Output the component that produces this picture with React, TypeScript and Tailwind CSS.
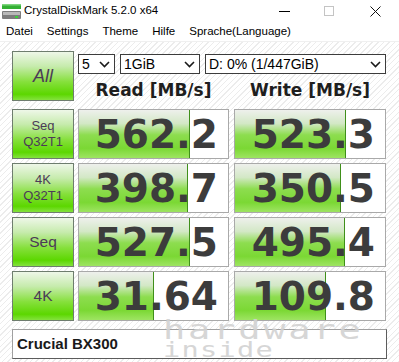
import React from 'react';

type Row = {
  label: string[];
  read: string;
  write: string;
  readFill: number;
  writeFill: number;
};

const rows: Row[] = [
  { label: ['Seq', 'Q32T1'], read: '562.2', write: '523.3', readFill: 111, writeFill: 111 },
  { label: ['4K', 'Q32T1'], read: '398.7', write: '350.5', readFill: 109, writeFill: 106 },
  { label: ['Seq'], read: '527.5', write: '495.4', readFill: 111, writeFill: 110 },
  { label: ['4K'], read: '31.64', write: '109.8', readFill: 75, writeFill: 91 },
];

const Chevron = () => (
  <svg width="11" height="7" viewBox="0 0 11 7" className="shrink-0">
    <path d="M1 1 L5.5 5.5 L10 1" fill="none" stroke="#1a1a1a" strokeWidth="1.6" />
  </svg>
);

const Select = ({ value, width }: { value: string; width: string }) => (
  <div className={`${width} h-[20px] bg-white border border-[#3c3c3c] flex items-center justify-between pl-[3px] pr-[4px] text-[14px] text-black leading-none`}>
    <span>{value}</span>
    <Chevron />
  </div>
);

const LabelButton = ({ children, h }: { children: React.ReactNode; h: string }) => (
  <div className={`w-[62px] ${h} shrink-0 border border-[#6e7d6e] bg-[linear-gradient(to_bottom,#eef7e8_0%,#c6ebac_30%,#86e03c_62%,#5cd700_88%,#84e23e_100%)] flex flex-col items-center justify-center text-[#4b3b57]`}>
    {children}
  </div>
);

const ValueBox = ({ value, fill, width }: { value: string; fill: number; width: string }) => (
  <div className={`${width} h-full relative border border-[#a9a9a9] bg-white`}>
    <div
      className="h-full border-r border-[#3f8f1a] bg-[linear-gradient(to_bottom,#eef0ec_0%,#d3e8c6_28%,#8ddd4f_52%,#7bd834_80%,#9ee462_100%)]"
      style={{ width: fill }}
    />
    <div className="absolute inset-0 flex items-center justify-end pr-[10px] font-['DejaVu_Sans',Verdana,sans-serif] font-bold text-[39px] text-[#3c3c3c] leading-none">
      {value}
    </div>
  </div>
);

export default function App() {
  return (
    <div className="w-[399px] h-[362px] overflow-hidden bg-white flex flex-col relative font-['Liberation_Sans',Arial,sans-serif] text-black">
      {/* title bar */}
      <div className="h-[22px] flex items-center shrink-0">
        <svg width="19" height="16" viewBox="0 0 19 16" className="ml-[2px]">
          <rect x="0" y="1" width="19" height="5" fill="#34b034" />
          <rect x="0" y="1" width="19" height="1.5" fill="#7fd67f" />
          <rect x="0" y="8" width="19" height="8" rx="1" fill="#7d7d7d" />
          <rect x="1" y="9" width="17" height="3" fill="#b9b9b9" />
          <rect x="13" y="13" width="3" height="2" fill="#3ad13a" />
        </svg>
        <span className="ml-[3px] text-[11.5px]">CrystalDiskMark 5.2.0 x64</span>
        <div className="ml-auto flex items-center">
          <div className="w-[11px] h-px bg-black mr-[34px]" />
          <div className="w-[10px] h-[10px] border border-[#c4c4c4] mr-[36px]" />
          <svg width="11" height="11" viewBox="0 0 11 11" className="mr-[18px]">
            <path d="M0.5 0.5 L10.5 10.5 M10.5 0.5 L0.5 10.5" stroke="#111" strokeWidth="1" />
          </svg>
        </div>
      </div>

      {/* menu bar */}
      <div className="h-[19px] flex items-center pl-[6px] gap-[14px] text-[11.5px] shrink-0">
        <span>Datei</span>
        <span>Settings</span>
        <span>Theme</span>
        <span>Hilfe</span>
        <span>Sprache(Language)</span>
      </div>

      {/* main area */}
      <div className="flex-1 pl-[12px] pt-[9px] bg-[repeating-linear-gradient(135deg,#ffffff_0px,#ffffff_3px,#ececec_3px,#ececec_4px)] border-t border-[#f0f0f0]">
        <div className="flex">
          <LabelButton h="h-[50px]">
            <span className="text-[18px] italic leading-none">All</span>
          </LabelButton>
          <div className="ml-[4px] flex flex-col">
            <div className="flex gap-[5px] mt-[3px]">
              <Select value="5" width="w-[37px]" />
              <Select value="1GiB" width="w-[80px]" />
              <Select value="D: 0% (1/447GiB)" width="w-[181px]" />
            </div>
            <div className="flex gap-[5px] h-[31px] pt-[2px] items-center font-['DejaVu_Sans',Verdana,sans-serif] font-bold text-[17px] text-[#1e1e1e]">
              <div className="w-[151px] text-center">Read [MB/s]</div>
              <div className="w-[152px] text-center">Write [MB/s]</div>
            </div>
          </div>
        </div>

        <div className="flex flex-col gap-[4px] mt-[4px]">
          {rows.map((r) => (
            <div key={r.read} className="flex h-[50px]">
              <LabelButton h="h-full">
                {r.label.map((l) => (
                  <span
                    key={l}
                    className={r.label.length > 1 ? 'text-[13px] leading-[16px]' : 'text-[15.5px] leading-none'}
                  >
                    {l}
                  </span>
                ))}
              </LabelButton>
              <div className="ml-[4px] flex gap-[5px] h-full">
                <ValueBox value={r.read} fill={r.readFill} width="w-[151px]" />
                <ValueBox value={r.write} fill={r.writeFill} width="w-[152px]" />
              </div>
            </div>
          ))}
        </div>

        <div className="mt-[8px] w-[375px] h-[30px] bg-white border border-[#a0a0a0] border-r-[#5c5c5c] border-b-[#5c5c5c] flex items-center pl-[4px] font-bold text-[15px] text-[#1a1a1a]">
          Crucial BX300
        </div>
      </div>

      {/* watermark */}
      <div className="absolute left-[163px] top-[317px] pointer-events-none text-[#d2d2d2] opacity-90 font-['DejaVu_Sans_Mono',monospace] leading-none">
        <div className="text-[26px] tracking-[2px] origin-left scale-x-[1.42]">hardware</div>
        <div className="text-[22px] tracking-[1px] origin-left scale-x-[1.3] -mt-[4px]">inside</div>
      </div>
    </div>
  );
}
